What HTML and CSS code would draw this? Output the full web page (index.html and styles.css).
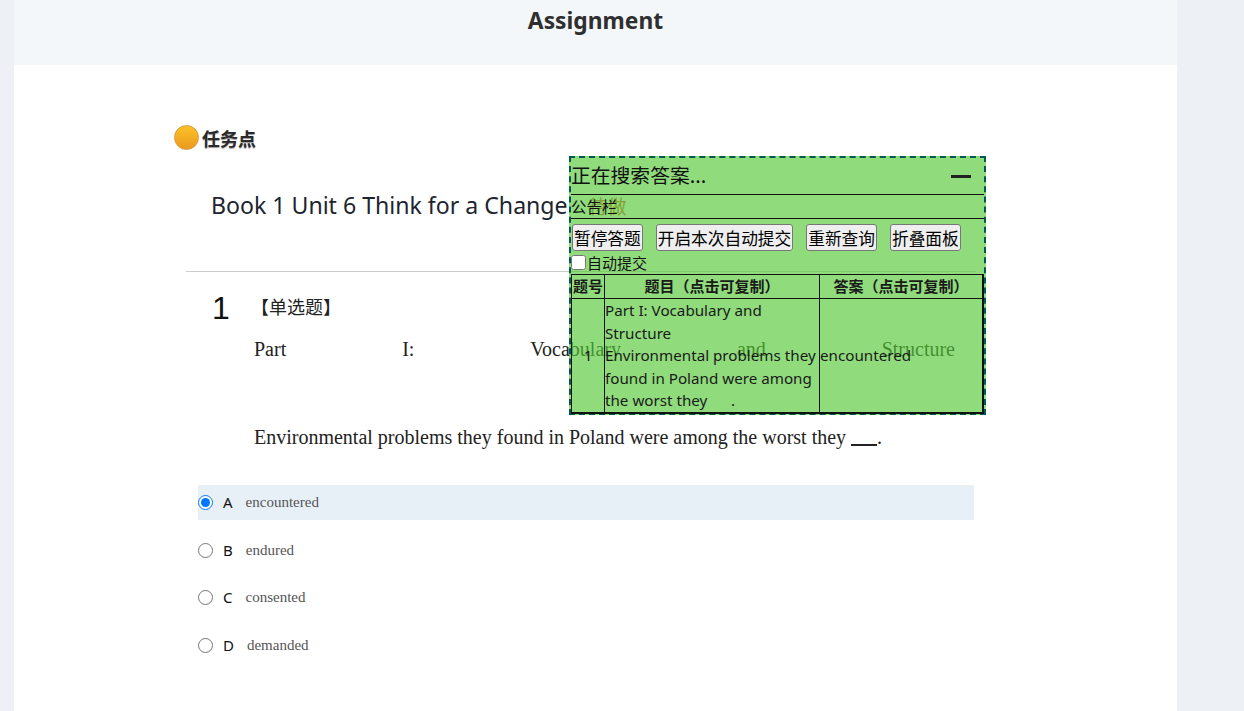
FILE: index.html
```html
<!DOCTYPE html>
<html lang="zh-CN">
<head>
    <meta charset="UTF-8">
    <title>Assignment</title>
    <link rel="stylesheet" href="styles.css">
</head>
<body>
    <div class="page">
        <div class="header">
            <h1>Assignment</h1>
        </div>
        <div class="content">
            <div class="task-point">
                <span class="orb"></span>
                <span class="task-label">任务点</span>
            </div>
            <h2 class="book-title">Book 1 Unit 6 Think for a Change<span class="todo">待做</span></h2>
            <div class="question">
                <div class="question-head">
                    <span class="question-num">1</span>
                    <span class="question-type">【单选题】</span>
                </div>
                <div class="part-line">
                    <span>Part</span><span>I:</span><span>Vocabulary</span><span>and</span><span>Structure</span>
                </div>
                <p class="stem">Environmental problems they found in Poland were among the worst they <span class="blank"></span>.</p>
                <div class="options">
                    <label class="option selected">
                        <input type="radio" name="q1" checked>
                        <span class="opt-letter">A</span>
                        <span class="opt-text">encountered</span>
                    </label>
                    <label class="option">
                        <input type="radio" name="q1">
                        <span class="opt-letter">B</span>
                        <span class="opt-text">endured</span>
                    </label>
                    <label class="option">
                        <input type="radio" name="q1">
                        <span class="opt-letter">C</span>
                        <span class="opt-text">consented</span>
                    </label>
                    <label class="option">
                        <input type="radio" name="q1">
                        <span class="opt-letter">D</span>
                        <span class="opt-text">demanded</span>
                    </label>
                </div>
            </div>
        </div>
    </div>

    <div class="panel">
        <div class="panel-title">
            <span>正在搜索答案...</span>
            <span class="panel-min"></span>
        </div>
        <div class="panel-notice">公告栏</div>
        <div class="panel-buttons">
            <button class="panel-btn">暂停答题</button>
            <button class="panel-btn">开启本次自动提交</button>
            <button class="panel-btn">重新查询</button>
            <button class="panel-btn">折叠面板</button>
        </div>
        <div class="panel-check">
            <input type="checkbox" id="autoSubmit">
            <label for="autoSubmit">自动提交</label>
        </div>
        <table class="answers">
            <tr>
                <th class="col-num">题号</th>
                <th class="col-q">题目（点击可复制）</th>
                <th>答案（点击可复制）</th>
            </tr>
            <tr>
                <td class="cell-num">1</td>
                <td>Part I: Vocabulary and Structure<br>Environmental problems they found in Poland were among the worst they &nbsp;&nbsp;&nbsp;&nbsp; .</td>
                <td>encountered</td>
            </tr>
        </table>
    </div>
</body>
</html>
```

FILE: styles.css
```css
* {
    box-sizing: border-box;
}

html, body {
    height: 711px;
    overflow: hidden;
}

body {
    margin: 0;
    background: #edf1f5;
    font-family: "Noto Sans", "Noto Sans CJK SC", sans-serif;
    color: #222;
}

.page {
    width: 1163px;
    height: 711px;
    margin-left: 14px;
    background: white;
}

.header {
    height: 65px;
    background: #f3f7fa;
    text-align: center;
}

.header h1 {
    margin: 0;
    font-size: 22.8px;
    line-height: 41px;
    font-weight: 700;
    color: #2f2f2f;
}

.content {
    padding: 60px 0 0 160px;
}

.task-point {
    display: flex;
    align-items: center;
    gap: 3px;
    height: 25px;
}

.orb {
    width: 25px;
    height: 25px;
    border-radius: 50%;
    background: linear-gradient(#fcc227, #eb9a1f);
    border: 1px solid #dd9a3e;
}

.task-label {
    font-family: "Noto Sans CJK SC", sans-serif;
    font-size: 18px;
    font-weight: 700;
    color: #2a2a2a;
    text-shadow: 0 1px 1px #999;
}

.book-title {
    margin: 38px 0 0 37px;
    font-size: 23.1px;
    line-height: 34px;
    font-weight: 400;
    color: #1c2430;
}

.todo {
    margin-left: 21px;
    font-family: "Noto Sans CJK SC", sans-serif;
    font-size: 19px;
    color: #d9532c;
}

.question {
    margin: 48px 0 0 12px;
    border-top: 1px solid #ccc;
    width: 790px;
}

.question-head {
    display: flex;
    align-items: center;
    padding: 14px 0 0 26px;
    height: 58px;
}

.question-num {
    width: 39px;
    font-family: "Liberation Sans", sans-serif;
    font-size: 32px;
    color: #111;
}

.question-type {
    font-family: "Noto Sans CJK SC", sans-serif;
    font-size: 18px;
    line-height: 24px;
    margin-top: -4px;
    color: #222;
}

.part-line {
    display: flex;
    justify-content: space-between;
    width: 701px;
    margin: 6px 0 0 68px;
    font-family: "Liberation Serif", serif;
    font-size: 20px;
    line-height: 26px;
    color: #222;
}

.stem {
    margin: 62px 0 0 68px;
    font-family: "Liberation Serif", serif;
    font-size: 20px;
    line-height: 26px;
    color: #222;
}

.blank {
    display: inline-block;
    width: 26px;
    height: 17px;
    margin-bottom: -2px;
    border-bottom: 2px solid #222;
}

.options {
    margin: 35px 0 0 12px;
    display: flex;
    flex-direction: column;
    gap: 12.5px;
}

.option {
    display: flex;
    align-items: center;
    width: 776px;
    height: 35px;
}

.option.selected {
    background: #e8f0f7;
}

.option input {
    width: 15px;
    height: 15px;
    margin: 0;
}

.opt-letter {
    margin: -1px 13px 0 10px;
    font-size: 15px;
    color: #111;
}

.opt-text {
    font-family: "Liberation Serif", serif;
    font-size: 15px;
    color: #555;
}

/* floating answer panel */
.panel {
    position: absolute;
    left: 569px;
    top: 156px;
    width: 417px;
    height: 259px;
    border: 2px dashed #005a4e;
    background: rgba(86, 201, 56, 0.66);
    font-family: "Noto Sans CJK SC", sans-serif;
    color: #111;
}

.panel-title {
    display: flex;
    justify-content: space-between;
    align-items: center;
    height: 37px;
    padding: 0 13px 3px 0;
    font-size: 19.8px;
    line-height: 34px;
    border-bottom: 1px solid #111;
}

.panel-min {
    width: 20px;
    height: 3px;
    margin-top: 3px;
    background: #222;
}

.panel-notice {
    height: 24px;
    font-size: 15.5px;
    line-height: 22px;
    border-bottom: 1px solid #111;
}

.panel-buttons {
    display: flex;
    gap: 13px;
    padding: 5px 0 0 1px;
}

.panel-btn {
    height: 27px;
    padding: 0 1px;
    font-family: "Noto Sans CJK SC", sans-serif;
    font-size: 16.7px;
    line-height: 20px;
    color: #000;
    background: #efefef;
    border: 1px solid #777;
    border-radius: 3px;
}

.panel-check {
    display: flex;
    align-items: center;
    gap: 1px;
    height: 23px;
    font-size: 15px;
}

.panel-check input {
    width: 15px;
    height: 15px;
    margin: 0;
}

.answers {
    width: 413px;
    border-collapse: collapse;
    border: 1px solid #111;
    border-right-width: 2px;
    table-layout: fixed;
    font-size: 15.2px;
    line-height: 22.5px;
}

.answers th, .answers td {
    border: 1px solid #111;
    padding: 0;
    color: #1a1a1a;
}

.answers th {
    height: 24px;
    font-size: 15px;
    font-weight: 700;
}

.answers tr:last-child td {
    border-bottom-width: 2px;
}

.col-num {
    width: 33px;
}

.col-q {
    width: 215px;
}

.answers td {
    font-family: "Noto Sans", "Noto Sans CJK SC", sans-serif;
}

.cell-num {
    text-align: center;
    padding-top: 6px;
}
```
